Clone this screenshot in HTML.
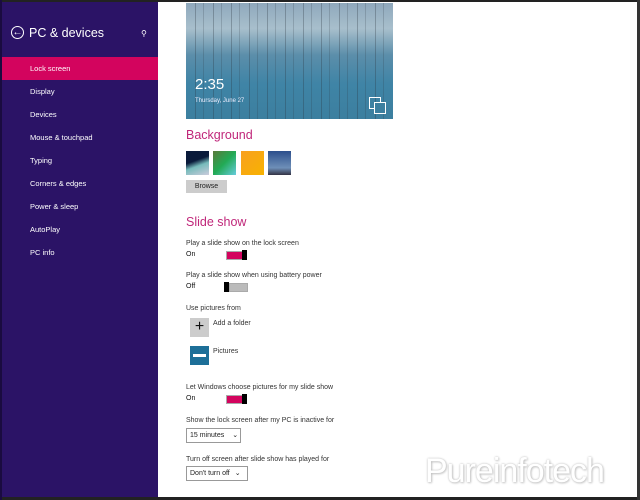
<!DOCTYPE html>
<html><head><style>
body{margin:0;width:640px;height:500px;overflow:hidden;background:#fff;font-family:"Liberation Sans",sans-serif;position:relative}
.a{position:absolute}
.side{left:0;top:0;width:158px;height:500px;background:#2b1366}
.nav{left:30px;color:#fff;font-size:7.5px}
.t{font-size:7px;color:#333;left:186px}
.h{font-size:12.5px;color:#c0277a;left:186px}
</style></head><body>
<div class="a side"></div>
<div class="a" style="left:0;top:0;width:640px;height:2px;background:#222"></div>
<div class="a" style="left:0;top:497px;width:640px;height:3px;background:#222"></div>
<div class="a" style="left:0;top:0;width:2px;height:500px;background:#1a0b40"></div>
<div class="a" style="left:637px;top:0;width:3px;height:500px;background:#333"></div>
<div class="a" style="left:11px;top:26px;width:11px;height:11px;border:1.5px solid #fff;border-radius:50%;color:#fff;font-size:10px;line-height:11px;text-align:center;font-weight:bold">←</div>
<div class="a" style="left:29px;top:26px;color:#fff;font-size:12.5px">PC &amp; devices</div>
<div class="a" style="left:141px;top:29px;color:#fff;font-size:8px">⚲</div>
<div class="a" style="left:2px;top:57px;width:156px;height:23px;background:#d3045e"></div>
<div class="a nav" style="top:64px">Lock screen</div>
<div class="a nav" style="top:87px">Display</div>
<div class="a nav" style="top:110px">Devices</div>
<div class="a nav" style="top:133px">Mouse &amp; touchpad</div>
<div class="a nav" style="top:156px">Typing</div>
<div class="a nav" style="top:179px">Corners &amp; edges</div>
<div class="a nav" style="top:202px">Power &amp; sleep</div>
<div class="a nav" style="top:225px">AutoPlay</div>
<div class="a nav" style="top:248px">PC info</div>

<div class="a" style="left:186px;top:3px;width:207px;height:116px;background:linear-gradient(180deg,#8fa8bc 0%,#a8bfcc 22%,#5b8eaa 45%,#3f84a6 70%,#3c7f9f 100%)">
<div class="a" style="inset:0;background:repeating-linear-gradient(90deg,transparent 0 9px,rgba(40,50,60,.3) 9px 10px,transparent 10px 17px,rgba(40,50,60,.2) 17px 18px);"></div>
<div class="a" style="left:9px;top:73px;color:#fff;font-size:15px">2:35</div>
<div class="a" style="left:9px;top:95px;color:#eef;font-size:6px">Thursday, June 27</div>
<div class="a" style="left:183px;top:94px;width:10px;height:10px;border:1.5px solid #fff"></div>
<div class="a" style="left:188px;top:99px;width:10px;height:10px;border:1.5px solid #fff;background:#3c7f9f"></div>
</div>
<div class="a h" style="top:128px">Background</div>
<div class="a" style="left:186px;top:151px;width:23px;height:24px;background:linear-gradient(160deg,#0a1a3a 40%,#7bb 60%,#ccd)"></div>
<div class="a" style="left:213px;top:151px;width:23px;height:24px;background:linear-gradient(135deg,#5a7a3a,#2a5 50%,#6cd)"></div>
<div class="a" style="left:241px;top:151px;width:23px;height:24px;background:linear-gradient(135deg,#f9a020,#f7b200)"></div>
<div class="a" style="left:268px;top:151px;width:23px;height:24px;background:linear-gradient(180deg,#2c4f8c,#6e8fb8 70%,#334)"></div>
<div class="a" style="left:186px;top:180px;width:41px;height:13px;background:#ccc;font-size:7px;line-height:13px;text-align:center;color:#222">Browse</div>
<div class="a h" style="top:215px">Slide show</div>
<div class="a t" style="top:240px">Play a slide show on the lock screen</div>
<div class="a t" style="top:251px;color:#111">On</div>
<div class="a" style="left:226px;top:251px;width:15px;height:7px;background:#d3045e;border:1px solid #aaa"></div>
<div class="a" style="left:242px;top:250px;width:5px;height:10px;background:#000"></div>
<div class="a t" style="top:272px">Play a slide show when using battery power</div>
<div class="a t" style="top:283px;color:#111">Off</div>
<div class="a" style="left:224px;top:282px;width:5px;height:10px;background:#000"></div>
<div class="a" style="left:229px;top:283px;width:17px;height:7px;background:#bbb;border:1px solid #aaa"></div>
<div class="a t" style="top:305px">Use pictures from</div>
<div class="a" style="left:190px;top:318px;width:19px;height:19px;background:#ccc;font-size:16px;line-height:18px;text-align:center;color:#111">+</div>
<div class="a t" style="left:213px;top:320px">Add a folder</div>
<div class="a" style="left:190px;top:346px;width:19px;height:19px;background:#1d6f98"></div>
<div class="a" style="left:193px;top:354px;width:13px;height:3px;background:#fff"></div>
<div class="a t" style="left:213px;top:348px">Pictures</div>
<div class="a t" style="top:384px">Let Windows choose pictures for my slide show</div>
<div class="a t" style="top:395px;color:#111">On</div>
<div class="a" style="left:226px;top:395px;width:15px;height:7px;background:#d3045e;border:1px solid #aaa"></div>
<div class="a" style="left:242px;top:394px;width:5px;height:10px;background:#000"></div>
<div class="a t" style="top:417px">Show the lock screen after my PC is inactive for</div>
<div class="a" style="left:186px;top:428px;width:53px;height:13px;border:1px solid #999;font-size:7px;line-height:13px;color:#222;text-indent:3px">15 minutes <span style="margin-left:6px">⌄</span></div>
<div class="a t" style="top:456px">Turn off screen after slide show has played for</div>
<div class="a" style="left:186px;top:466px;width:60px;height:13px;border:1px solid #999;font-size:7px;line-height:13px;color:#222;text-indent:3px">Don't turn off <span style="margin-left:3px">⌄</span></div>
<div class="a" style="left:425px;top:452px;font-size:34px;color:#fff;text-shadow:0 0 2px #bbb,1px 1px 2px #ccc;letter-spacing:-1px">Pureinfotech</div>
</body></html>
